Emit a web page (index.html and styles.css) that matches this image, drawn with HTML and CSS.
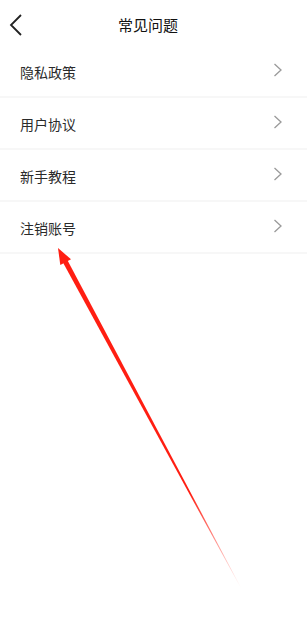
FILE: index.html
```html
<!DOCTYPE html>
<html lang="zh-CN">
<head>
    <meta charset="UTF-8">
    <meta name="viewport" content="width=device-width, initial-scale=1.0">
    <title>常见问题</title>
    <link rel="stylesheet" href="styles.css">
</head>
<body>
    <div class="page">
        <div class="topbar">
            <a class="back" href="#">
                <svg width="14" height="22" viewBox="0 0 14 22">
                    <path d="M12 1 L2 11 L12 21" fill="none" stroke="#222" stroke-width="1.8"/>
                </svg>
            </a>
            <h1 class="title">常见问题</h1>
        </div>

        <ul class="list">
            <li class="item"><span>隐私政策</span><svg class="arrow" width="10" height="14" viewBox="0 0 10 14"><path d="M1.5 1 L8 7 L1.5 13" fill="none" stroke="#9a9a9a" stroke-width="1.3"/></svg></li>
            <li class="item"><span>用户协议</span><svg class="arrow" width="10" height="14" viewBox="0 0 10 14"><path d="M1.5 1 L8 7 L1.5 13" fill="none" stroke="#9a9a9a" stroke-width="1.3"/></svg></li>
            <li class="item"><span>新手教程</span><svg class="arrow" width="10" height="14" viewBox="0 0 10 14"><path d="M1.5 1 L8 7 L1.5 13" fill="none" stroke="#9a9a9a" stroke-width="1.3"/></svg></li>
            <li class="item"><span>注销账号</span><svg class="arrow" width="10" height="14" viewBox="0 0 10 14"><path d="M1.5 1 L8 7 L1.5 13" fill="none" stroke="#9a9a9a" stroke-width="1.3"/></svg></li>
        </ul>

        <!-- annotation arrow drawn over the page -->
        <svg class="pointer" width="307" height="636" viewBox="0 0 307 636">
            <defs>
                <linearGradient id="fade" gradientUnits="userSpaceOnUse" x1="58" y1="248" x2="241" y2="588">
                    <stop offset="0" stop-color="#ff1e12"/>
                    <stop offset="0.72" stop-color="#ff1e12"/>
                    <stop offset="1" stop-color="#ff1e12" stop-opacity="0"/>
                </linearGradient>
            </defs>
            <polygon points="62,260.7 66.4,258.3 241.2,587.9 240.8,588.1" fill="url(#fade)"/>
            <polygon points="58,248 71,259.3 60.3,265" fill="#ff1e12"/>
        </svg>
    </div>
</body>
</html>
```

FILE: styles.css
```css
html, body {
    margin: 0;
    padding: 0;
    background: #fff;
    font-family: "Noto Sans CJK SC", "Noto Sans", sans-serif;
}

.page {
    position: relative;
    width: 307px;
    height: 636px;
    overflow: hidden;
}

.topbar {
    height: 46px;
    display: flex;
    align-items: center;
    justify-content: center;
    position: relative;
}

.back {
    position: absolute;
    left: 9px;
    top: 14px;
    display: block;
    line-height: 0;
}

.title {
    margin: 3px 11px 0 0;
    font-size: 15px;
    font-weight: normal;
    color: #111;
}

.list {
    list-style: none;
    margin: 0;
    padding: 0;
}

.item {
    height: 50px;
    border-bottom: 2px solid #f7f7f7;
    display: flex;
    align-items: center;
    justify-content: space-between;
    padding: 0 24px 0 20px;
    font-size: 14px;
    color: #2a2a2a;
}

.item span {
    margin-top: 1px;
}

.arrow {
    display: block;
    margin-top: -2px;
}

.pointer {
    position: absolute;
    left: 0;
    top: 0;
    pointer-events: none;
}
```
